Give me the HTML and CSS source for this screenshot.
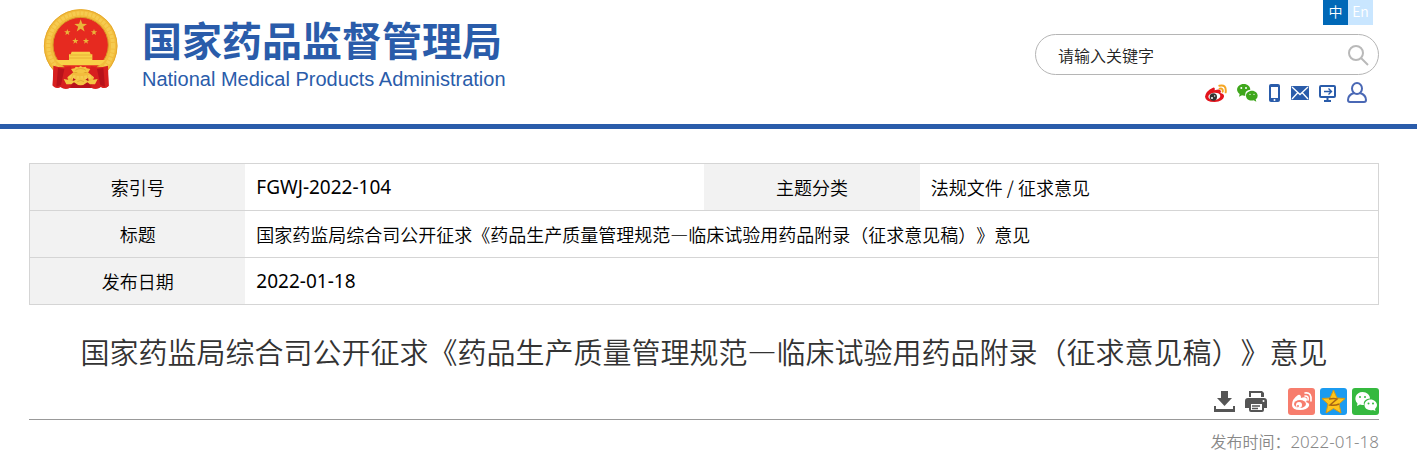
FILE: index.html
```html
<!DOCTYPE html>
<html lang="zh-CN">
<head>
  <meta charset="UTF-8">
  <meta name="viewport" content="width=device-width, initial-scale=1.0">
  <title>国家药监局综合司公开征求意见</title>
  <link rel="stylesheet" href="styles.css">
</head>
<body>
  <header class="header">
    <a class="logo" href="#">
      <svg class="emblem" viewBox="21 21 228 240" aria-hidden="true">
        <defs>
          <polygon id="star" points="0,-10 2.4,-3.2 9.5,-3.1 3.8,1.2 5.9,8.1 0,4 -5.9,8.1 -3.8,1.2 -9.5,-3.1 -2.4,-3.2"/>
        </defs>
        <path fill="#c8161d" d="M54 184 L50 250 Q62 262 72 254 Q84 264 100 258 H168 Q184 264 196 254 Q206 262 218 252 L214 184 Z"/>
        <circle cx="134" cy="132" r="110" fill="#f2bc3c"/>
        <circle cx="134" cy="131" r="97" fill="none" stroke="#f6cb50" stroke-width="12" stroke-dasharray="9 3"/>
        <circle cx="134" cy="132" r="109" fill="none" stroke="#e6a92c" stroke-width="3"/>
        <circle cx="134" cy="129" r="83" fill="#e62a20" stroke="#d99a28" stroke-width="3"/>
        <use href="#star" transform="translate(134 72) scale(2)" fill="#e9b53a"/>
        <use href="#star" transform="translate(94 91)" fill="#e9b53a"/>
        <use href="#star" transform="translate(174 91)" fill="#e9b53a"/>
        <use href="#star" transform="translate(118 117)" fill="#e9b53a"/>
        <use href="#star" transform="translate(150 117)" fill="#e9b53a"/>
        <path fill="#f8d148" d="M107 149 H161 L164 157 H169 V174 H208 Q200 184 192 190 H76 Q68 184 60 174 H99 V157 H104 Z"/>
        <path stroke="#e2a02e" stroke-width="2" d="M102 159 H166 M99 168 H169"/>
        <path fill="#d71f1f" d="M52 191 Q80 199 103 193 L112 211 L94 226 L103 257 Q86 264 75 254 Q62 263 50 251 Z M216 191 Q188 199 165 193 L156 211 L174 226 L165 257 Q182 264 193 254 Q206 263 218 251 Z"/>
        <path fill="#b8121b" d="M66 198 L61 254 L75 249 L85 201 Z M202 198 L207 254 L193 249 L183 201 Z M112 228 Q134 248 156 228 L164 258 H104 Z"/>
        <path fill="#f4c543" d="M105 201 L116 199 L119 194 L128 196 L134 192 L140 196 L149 194 L152 199 L163 201 L157 210 L148 210 Q134 219 120 210 L111 210 Z"/>
        <path fill="#f4c543" d="M83 231 L104 235 Q111 239 118 233 Q134 224 150 233 Q157 239 164 235 L185 231 L177 247 H162 L154 241 Q134 259 114 241 L106 247 H91 Z"/>
        <path fill="none" stroke="#d99a28" stroke-width="2" d="M118 205 Q134 194 150 205 M124 239 Q134 231 144 239"/>
      </svg>
      <span class="logo-text">
        <span class="logo-cn">国家药品监督管理局</span>
        <span class="logo-en" lang="en">National Medical Products Administration</span>
      </span>
    </a>

    <div class="header-right">
      <nav class="lang">
        <a class="active" href="#">中</a>
        <a href="#">En</a>
      </nav>
      <form class="search">
        <input type="text" placeholder="请输入关键字" aria-label="请输入关键字">
        <button type="submit" aria-label="搜索">
          <svg width="22" height="22" viewBox="0 0 22 22" fill="none" stroke="#b9b9b9" stroke-width="2">
            <circle cx="9" cy="9" r="7"/>
            <path d="M14 14 L21 21"/>
          </svg>
        </button>
      </form>
      <nav class="quick">
        <a href="#" aria-label="微博">
          <svg width="22" height="18" viewBox="0 0 66 54">
            <path fill="#e3141c" d="M24 11 Q31 9 29 19 Q47 12 48 23 L46 27 Q58 29 57 38 Q54 51 29 54 Q2 54 0 38 Q2 21 24 11 Z"/>
            <ellipse cx="28" cy="37" rx="18" ry="11" fill="#fff" transform="rotate(-6 28 37)"/>
            <circle cx="25" cy="39" r="11" fill="#333"/>
            <circle cx="21" cy="42" r="3" fill="#fff"/>
            <circle cx="29" cy="36" r="2" fill="#fff"/>
            <path fill="none" stroke="#f5a623" stroke-width="6" stroke-linecap="round" d="M43 5 Q65 0 62 25 M44 14 Q55 12 53 23"/>
          </svg>
        </a>
        <a href="#" aria-label="微信">
          <svg width="22" height="18" viewBox="0 0 66 54">
            <path fill="#3fa71c" d="M20 0 C32 0 40 8 40 17 C28 18 23 26 25 35 Q20 36 15 34 L6 38 L8 30 C-8 18 3 0 20 0 Z"/>
            <path fill="#3fa71c" d="M45 20 C55 20 62 27 62 35 Q62 42 56 46 L58 53 L50 49 C36 52 27 44 27 35 C27 27 35 20 45 20 Z"/>
            <g fill="#fff"><circle cx="13" cy="12" r="3"/><circle cx="27" cy="12" r="3"/><circle cx="39" cy="31" r="2"/><circle cx="51" cy="31" r="2"/></g>
          </svg>
        </a>
        <a href="#" aria-label="手机">
          <svg width="12" height="18" viewBox="0 0 12 18">
            <rect width="11" height="18" rx="2" fill="#2a5caa"/>
            <rect x="2" y="3" width="7" height="11" fill="#fff"/>
            <circle cx="5.500" cy="16" r="1" fill="#fff"/>
          </svg>
        </a>
        <a href="#" aria-label="邮箱">
          <svg width="18" height="14" viewBox="0 0 18 14">
            <rect width="18" height="14" rx="1" fill="#2a5caa"/>
            <path fill="none" stroke="#fff" stroke-width="1.300" d="M1 1 L9 8.500 L17 1 M1 13 L6.500 7 M17 13 L11.500 7"/>
          </svg>
        </a>
        <a href="#" aria-label="电脑版">
          <svg width="18" height="18" viewBox="0 0 18 18" fill="none" stroke="#2a5caa">
            <rect x="1" y="2" width="15" height="11" rx="1" stroke-width="2"/>
            <path stroke-width="1.400" d="M5 7.500 H12 M9.500 4.500 L12.500 7.500 L9.500 10.500"/>
            <path stroke-width="2" d="M8.500 13 V16 M5 17 H12"/>
          </svg>
        </a>
        <a href="#" aria-label="个人中心">
          <svg width="20" height="22" viewBox="0 0 20 22" fill="none" stroke="#4a68b5" stroke-width="2">
            <ellipse cx="10" cy="6.500" rx="5" ry="5.500"/>
            <path d="M7 11 Q1 13 1 18 Q1 20 3 20 H17 Q19 20 19 18 Q19 13 13 11"/>
          </svg>
        </a>
      </nav>
    </div>
  </header>

  <main class="content">
    <table class="info">
      <tr>
        <th scope="row">索引号</th>
        <td class="num">FGWJ-2022-104</td>
        <th scope="row">主题分类</th>
        <td>法规文件 / 征求意见</td>
      </tr>
      <tr>
        <th scope="row">标题</th>
        <td colspan="3">国家药监局综合司公开征求《药品生产质量管理规范—临床试验用药品附录（征求意见稿）》意见</td>
      </tr>
      <tr>
        <th scope="row">发布日期</th>
        <td class="num" colspan="3">2022-01-18</td>
      </tr>
    </table>

    <h1>国家药监局综合司公开征求《药品生产质量管理规范—临床试验用药品附录（征求意见稿）》意见</h1>

    <div class="tools">
      <div class="actions">
        <button type="button" aria-label="下载">
          <svg width="21" height="21" viewBox="0 0 21 21" fill="#555">
            <path d="M7 0 H14 V7 H18 L10.500 15 L3 7 H7 Z"/>
            <path d="M0 15 H2 V18 H19 V15 H21 V21 H0 Z"/>
          </svg>
        </button>
        <button type="button" aria-label="打印">
          <svg width="22" height="21" viewBox="0 0 22 21">
            <path fill="#555" d="M4 0 H17 L19 2 V6 H4 Z M3 7 H19 Q22 7 22 10 V17 H19 V19 Q19 21 17 21 H6 Q4 21 4 19 V17 H0 V10 Q0 7 3 7 Z"/>
            <path fill="#fff" d="M6 2 H16 V6 H6 Z M6 13 H17 V19 H6 Z"/>
            <path stroke="#555" stroke-width="1.500" d="M7 15 H15 M7 17.500 H13"/>
            <circle cx="18.500" cy="10" r="1" fill="#fff"/>
          </svg>
        </button>
      </div>
      <div class="share">
        <a class="weibo" href="#" aria-label="分享到微博">
          <svg width="27" height="27" viewBox="0 0 27 27">
            <path fill="#fff" d="M10 7 Q13 6 13 10 Q19 8 19 12 L18 14 Q22 15 21 18 Q19 22 12 22 Q4 22 4 17 Q4 11 10 7 Z"/>
            <ellipse cx="12" cy="16" rx="6" ry="4" fill="#f77d6d"/>
            <circle cx="11" cy="17" r="3" fill="#fff"/>
            <circle cx="10" cy="18" r="1" fill="#f77d6d"/>
            <path fill="none" stroke="#fff" stroke-width="1.600" stroke-linecap="round" d="M17 5 Q24 4 23 13 M17 8 Q21 8 20 12"/>
          </svg>
        </a>
        <a class="qzone" href="#" aria-label="分享到QQ空间">
          <svg width="27" height="27" viewBox="0 0 27 27">
            <path fill="#fdc51c" stroke="#d99b12" d="M13.500 2 L17 10 L25 10.500 L19 16 L21 25 L13.500 20.500 L6 25 L8 16 L2 10.500 L10 10 Z"/>
            <path fill="none" stroke="#a96513" stroke-width="1.500" d="M9 11 Q14 10 17 11 L10 17 Q15 18 19 16"/>
          </svg>
        </a>
        <a class="wechat" href="#" aria-label="分享到微信">
          <svg width="27" height="27" viewBox="0 0 27 27">
            <path fill="#fff" d="M10.500 4 C15 4 18 7 18 10.500 C13 11 11 14 12 17 Q10 17 8 16.500 L5 18 L5.500 15.500 C1 11 4 4 10.500 4 Z"/>
            <path fill="#fff" d="M18.500 11.500 C22 11.500 25 14 25 17 Q25 19.500 23 21 L23.500 23 L21 22 C16 23 12.500 20.500 12.500 17 C12.500 14 15 11.500 18.500 11.500 Z"/>
            <g fill="#35b93f"><circle cx="8" cy="9" r="1"/><circle cx="13" cy="9" r="1"/><circle cx="16.500" cy="15.500" r="1"/><circle cx="21" cy="15.500" r="1"/></g>
          </svg>
        </a>
      </div>
    </div>

    <p class="date">发布时间：<span class="date-num">2022-01-18</span></p>
  </main>
</body>
</html>
```
FILE: styles.css
```css
* {
  box-sizing: border-box;
}

body {
  margin: 0;
  font-family: "Noto Sans CJK SC", sans-serif;
  font-weight: 350;
  text-spacing-trim: space-all;
  background: #fff;
  color: #000;
}

a {
  color: inherit;
  text-decoration: none;
}

svg {
  display: block;
}

button {
  padding: 0;
  border: none;
  background: none;
  cursor: pointer;
}

/* header */
.header {
  display: flex;
  justify-content: space-between;
  align-items: flex-start;
  padding: 0 38px 20px 43px;
  border-bottom: 5px solid #2a5caa;
}

.logo {
  display: flex;
  gap: 23px;
  padding-top: 9px;
  color: #2a5caa;
}

.emblem {
  width: 76px;
  height: 80px;
}

.logo-text {
  display: flex;
  flex-direction: column;
  padding-top: 6px;
}

.logo-cn {
  font-size: 40px;
  font-weight: 700;
  line-height: 48px;
}

.logo-en {
  font-family: "Liberation Sans", sans-serif;
  font-size: 20px;
  font-weight: 400;
  line-height: 32px;
}

.header-right {
  display: flex;
  flex-direction: column;
  align-items: flex-end;
  width: 344px;
}

.lang {
  display: flex;
  margin: 0 6px 9px 0;
}

.lang a {
  width: 25px;
  height: 25px;
  font-size: 14px;
  line-height: 22px;
  text-align: center;
  color: #fff;
  background: #c9e6ff;
}

.lang a.active {
  background: #0068b7;
}

.search {
  display: flex;
  align-items: center;
  width: 100%;
  height: 41px;
  padding: 0 9px 0 22px;
  border: 1px solid #b5b5b5;
  border-radius: 21px;
}

.search input {
  flex: 1;
  min-width: 0;
  padding: 0;
  border: none;
  outline: none;
  background: none;
  font-family: inherit;
  font-size: 16px;
  font-weight: 350;
}

.search input::placeholder {
  color: #222;
}

.quick {
  display: flex;
  align-items: center;
  gap: 10px;
  margin-top: 7px;
  padding-right: 12px;
}

/* content */
.content {
  padding: 34px 38px 12px 29px;
}

.info {
  width: 100%;
  border: 1px solid #d5d5d5;
  border-collapse: collapse;
  table-layout: fixed;
}

.info tr {
  border-bottom: 1px solid #d5d5d5;
}

.info th,
.info td {
  height: 47px;
  padding: 0 11px;
  font-size: 18px;
  line-height: 24px;
}

.info th {
  width: 16%;
  font-weight: 350;
  background: #f2f2f2;
}

.info td {
  width: 34%;
}

.info .num {
  font-family: "Noto Sans", sans-serif;
  font-size: 19px;
  font-weight: 400;
}

h1 {
  margin: 24px 0 15px;
  font-size: 29px;
  font-weight: 350;
  line-height: 44px;
  text-align: center;
  color: #333;
}

.tools {
  display: flex;
  justify-content: flex-end;
  align-items: center;
  gap: 21px;
  padding-bottom: 4px;
  border-bottom: 1px solid #999;
}

.actions {
  display: flex;
  gap: 10px;
}

.share {
  display: flex;
  gap: 5px;
}

.share a {
  border-radius: 3px;
}

.weibo {
  background: #f77d6d;
}

.qzone {
  background: #1b9bf0;
}

.wechat {
  background: #35b93f;
}

.date {
  margin: 9px 0 0;
  font-size: 16px;
  line-height: 24px;
  text-align: right;
  color: #888;
}

.date-num {
  font-family: "Noto Sans", sans-serif;
  font-size: 17px;
}
```
